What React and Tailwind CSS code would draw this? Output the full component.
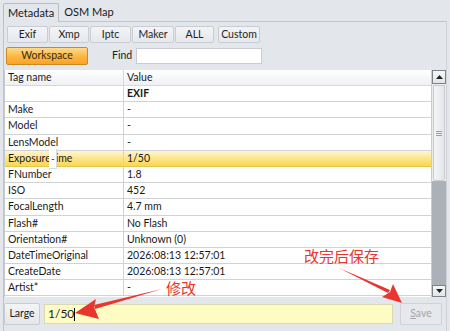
import React from "react";

const rows = [
  ["", "EXIF", "bold"],
  ["Make", "-"],
  ["Model", "-"],
  ["LensModel", "-"],
  ["ExposureTime", "1/50", "sel"],
  ["FNumber", "1.8"],
  ["ISO", "452"],
  ["FocalLength", "4.7 mm"],
  ["Flash#", "No Flash"],
  ["Orientation#", "Unknown (0)"],
  ["DateTimeOriginal", "2026:08:13 12:57:01"],
  ["CreateDate", "2026:08:13 12:57:01"],
  ["Artist*", "-"],
];

function Btn({ children, w }) {
  return (
    <div
      className={`h-[17px] ${w} flex items-center justify-center border border-[#c9cdd3] rounded-[2px] bg-gradient-to-b from-[#f3f4f6] to-[#e6e8eb] text-[10.5px] text-[#1e1e1e]`}
    >
      {children}
    </div>
  );
}

export default function App() {
  return (
    <div
      className="relative w-[450px] h-[331px] overflow-hidden bg-[#e3e6ea] text-[#1a1a1a]"
      style={{ fontFamily: 'Lato, "Noto Sans CJK SC", sans-serif' }}
    >
      {/* tabs */}
      <div className="flex items-end h-[21px] pl-[3px] pt-[2px]">
        <div className="h-[19px] px-[4px] flex items-center border border-b-0 border-[#b8bdc5] rounded-t-[2px] bg-[#e3e6ea] text-[11px] relative z-10 -mb-px">
          Metadata
        </div>
        <div className="h-[17px] px-[5px] flex items-center text-[11px]">OSM Map</div>
      </div>
      <div className="mx-[3px] border-t border-l border-[#bfc4cb] h-[310px] flex flex-col border-r border-r-[#cfd3d8]">
        {/* button row */}
        <div className="flex gap-[1px] pl-[3px] pt-[4px]">
          <Btn w="w-[41px]">Exif</Btn>
          <Btn w="w-[40px]">Xmp</Btn>
          <Btn w="w-[41px]">Iptc</Btn>
          <Btn w="w-[42px]">Maker</Btn>
          <Btn w="w-[39px]">ALL</Btn>
          <div className="w-[2px]" />
          <Btn w="w-[42px]">Custom</Btn>
        </div>
        {/* workspace row */}
        <div className="flex items-center pl-[2px] mt-[4px] h-[18px]">
          <div className="w-[82px] h-[18px] flex items-center justify-center border border-[#c98a22] rounded-[2px] bg-gradient-to-b from-[#fddb8c] via-[#fbb845] to-[#f9a327] text-[10.5px] text-[#3a2a10]">
            Workspace
          </div>
          <div className="ml-[24px] text-[10.5px]">Find</div>
          <div className="ml-[4px] w-[126px] h-[16px] bg-white border border-[#c9cdd3]" />
        </div>
        {/* grid */}
        <div className="mt-[5px] flex h-[227px] border-l border-[#c5cad1]">
          <div className="flex-1 bg-white flex flex-col text-[10.5px]">
            <div className="h-[16px] flex bg-gradient-to-b from-[#ffffff] to-[#eef0f3] border-b border-[#d5d8dc]">
              <div className="w-[119px] pl-[3px] border-r border-[#d5d8dc] leading-[15px]">Tag name</div>
              <div className="flex-1 pl-[3px] leading-[15px]">Value</div>
            </div>
            {rows.map(([k, v, t], i) => (
              <div
                key={i}
                className={`h-[16.2px] flex border-b border-[#cfd2d6] ${
                  t === "sel"
                    ? "bg-gradient-to-b from-[#fff6cf] via-[#fde58a] to-[#fbd64f] border-[#e6c64d]"
                    : ""
                }`}
              >
                <div className="w-[119px] pl-[3px] border-r border-[#cfd2d6] leading-[15px]">
                  {t === "sel" ? (
                    <>
                      Exposure
                      <span className="relative">
                        Ti
                        <span className="absolute left-0 -top-[3px] w-[8px] h-[20px] bg-white border-r border-b border-[#d8d8d8] text-[10px] leading-[18px] text-center">
                          -
                        </span>
                      </span>
                      me
                    </>
                  ) : (
                    k
                  )}
                </div>
                <div className={`flex-1 pl-[3px] leading-[15px] ${t === "bold" ? "font-bold" : ""}`}>{v}</div>
              </div>
            ))}
          </div>
          {/* scrollbar */}
          <div className="w-[15px] flex flex-col bg-[#e9ebee] border-l border-[#c9cdd3]">
            <div className="h-[14px] border border-[#7d8289] bg-gradient-to-b from-[#f6f7f8] to-[#e2e4e7] flex items-center justify-center">
              <svg width="7" height="4" viewBox="0 0 7 4"><path d="M0 4 L3.5 0 L7 4Z" fill="#222" /></svg>
            </div>
            <div className="h-[96px] mt-px mx-px rounded-b-[3px] border border-[#c8ccd2] bg-gradient-to-r from-[#f4f5f7] to-[#e3e5e8] flex items-center justify-center">
              <div className="flex flex-col gap-[1px]">
                <div className="w-[6px] h-px bg-[#9aa0a8]" />
                <div className="w-[6px] h-px bg-[#9aa0a8]" />
                <div className="w-[6px] h-px bg-[#9aa0a8]" />
              </div>
            </div>
            <div className="flex-1 bg-[#acb0b8]" />
            <div className="h-[12px] border border-[#7d8289] bg-gradient-to-b from-[#f6f7f8] to-[#e2e4e7] flex items-center justify-center">
              <svg width="7" height="4" viewBox="0 0 7 4"><path d="M0 0 L3.5 4 L7 0Z" fill="#222" /></svg>
            </div>
          </div>
        </div>
        {/* bottom bar */}
        <div className="flex items-center pt-[6px] gap-[4px]">
          <div className="w-[36px] h-[22px] flex items-center justify-center border border-[#c9cdd3] rounded-[2px] bg-gradient-to-b from-[#f3f4f6] to-[#e4e6e9] text-[10.5px]">
            Large
          </div>
          <div className="w-[349px] h-[20px] bg-[#fefbc3] border border-[#d9d8b5] pl-[3px] text-[12px] leading-[18px]">
            1/50<span className="inline-block w-px h-[13px] bg-black align-middle" />
          </div>
          <div className="ml-[3px] w-[42px] h-[22px] flex items-center justify-center border border-[#cfd2d6] rounded-[2px] bg-[#e6e8eb] text-[10.5px] text-[#a3a6ab]">
            <span><span className="underline">S</span>ave</span>
          </div>
        </div>
      </div>

      {/* annotations */}
      <div
        className="absolute left-[166px] top-[279px] text-[15px] text-[#e8352e] leading-[18px]"
        style={{ fontFamily: '"Noto Sans CJK SC", sans-serif' }}
      >
        修改
      </div>
      <div
        className="absolute left-[304px] top-[247px] text-[15px] text-[#e8352e] leading-[18px]"
        style={{ fontFamily: '"Noto Sans CJK SC", sans-serif' }}
      >
        改完后保存
      </div>
      <svg className="absolute left-0 top-0" width="450" height="331" viewBox="0 0 450 331">
        <path d="M162 289 L94 305 L95 309 Z" fill="#e8352e" />
        <path d="M75 313 L96 299 L94 307 L99 319 Z" fill="#e8352e" />
        <path d="M339 268 L388 293 L390 290 Z" fill="#e8352e" />
        <path d="M402 303 L382 297 L390 292 L393 284 Z" fill="#e8352e" />
      </svg>
    </div>
  );
}
